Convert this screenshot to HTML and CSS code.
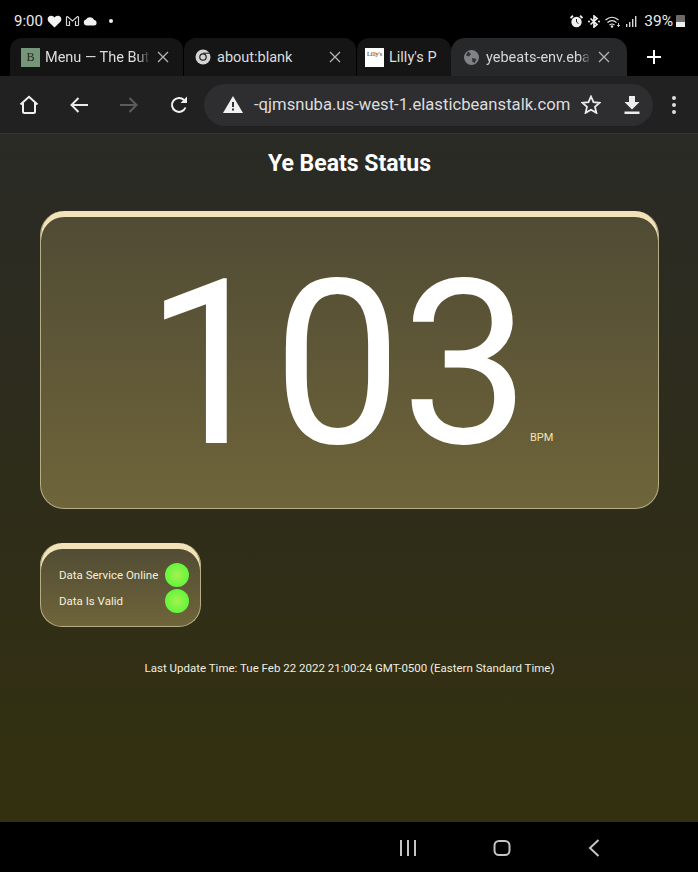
FILE: index.html
```html
<!DOCTYPE html>
<html lang="en">
<head>
    <meta charset="UTF-8">
    <meta name="viewport" content="width=device-width, initial-scale=1.0">
    <title>Ye Beats Status</title>
    <link rel="stylesheet" href="styles.css">
</head>
<body>
<div class="status-bar">
    <div class="status-left">
        <span class="clock">9:00</span>
        <svg class="st-icon" width="15" height="13" viewBox="0 0 15 13"><path d="M7.500 12.500 1.600 6.800C-.2 4.900.6 1.200 3.600.8c1.700-.2 3 .6 3.900 1.800C8.400 1.400 9.700.6 11.400.8c3 .4 3.800 4.100 2 6z" fill="#f2f2f2"/></svg>
        <svg class="st-icon" width="15" height="12" viewBox="0 0 15 12"><path d="M1.500 10.500V2.500q0-1.200 1.200-.7L7.500 6l4.800-4.200q1.200-.5 1.200.7v8M1.500 10.500h3V6M13.500 10.500h-3V6" fill="none" stroke="#d8d8d8" stroke-width="1.200"/></svg>
        <svg class="st-icon" width="15" height="9" viewBox="0 0 15 9"><path d="M3.500 8.500a3 3 0 0 1-.5-5.900A4.500 4.500 0 0 1 11.200 3a2.800 2.800 0 0 1 .3 5.500z" fill="#f0f0f0"/></svg>
        <span class="dot"></span>
    </div>
    <div class="status-right">
        <svg width="13" height="13" viewBox="0 0 13 13"><circle cx="6.500" cy="7" r="5.200" fill="#f0f0f0"/><path d="M.5 3 3 .8M12.500 3 10 .8" stroke="#f0f0f0" stroke-width="1.800"/><path d="M6.500 4v3l2 1.500" stroke="#222" fill="none"/></svg>
        <svg class="st-bt" width="12" height="13" viewBox="0 0 12 13"><path d="M2.500 3.500 9 9.500 6 12V1l3 2.500-6.500 6" fill="none" stroke="#f0f0f0" stroke-width="1.700"/><circle cx="1" cy="6.500" r="1" fill="#f0f0f0"/><circle cx="11" cy="6.500" r="1" fill="#f0f0f0"/></svg>
        <svg class="st-wifi" width="16" height="13" viewBox="0 0 16 13"><path d="M.5 5q6.500-5.500 13 0M2.500 7.500q4.500-3.800 9 0M4.500 10q2.500-2 5 0" fill="none" stroke="#e8e8e8" stroke-width="1.200"/><circle cx="7" cy="11.500" r="1.200" fill="#e8e8e8"/><path d="M13.500 8v4M12 10.500h3" stroke="#ccc"/></svg>
        <svg width="11" height="12" viewBox="0 0 11 12"><path d="M0 9h1.400v3H0zM3 7h1.400v5H3zM6 4h1.400v8H6zM9 1h1.400v11H9z" fill="#d8d8d8"/></svg>
        <span class="battery-text">39%</span>
        <span class="battery"><span class="battery-fill"></span></span>
    </div>
</div>

<div class="tab-strip">
    <div class="tab tab-1">
        <span class="fav fav-b">B</span>
        <span class="tab-title">Menu — The But</span>
        <svg class="tab-x" width="12" height="12" viewBox="0 0 12 12"><path d="M1 1l10 10M11 1 1 11" stroke="#b4b4b4" stroke-width="1.300"/></svg>
    </div>
    <div class="tab tab-2">
        <svg class="fav-svg" width="16" height="16" viewBox="0 0 16 16"><circle cx="8" cy="8" r="7.500" fill="#d4d4d4"/><circle cx="8" cy="8" r="3.800" fill="#1c1c1c"/><circle cx="8" cy="8" r="2.600" fill="#d4d4d4"/><path d="M8 4.200h6.600" stroke="#1c1c1c" stroke-width="1"/></svg>
        <span class="tab-title">about:blank</span>
        <svg class="tab-x" width="12" height="12" viewBox="0 0 12 12"><path d="M1 1l10 10M11 1 1 11" stroke="#b4b4b4" stroke-width="1.300"/></svg>
    </div>
    <div class="tab tab-3">
        <span class="fav fav-l">Lilly's</span>
        <span class="tab-title">Lilly's P</span>
    </div>
    <div class="tab tab-active">
        <svg class="fav-svg" width="15" height="15" viewBox="0 0 15 15"><circle cx="7.500" cy="7.500" r="7.500" fill="#808285"/><path d="M4 1.500 7 4 5 6.500 2 5.500zM8 8l4.500 1-2 4-2-1z" fill="#303134"/></svg>
        <span class="tab-title">yebeats-env.eba</span>
        <svg class="tab-x" width="12" height="12" viewBox="0 0 12 12"><path d="M1 1l10 10M11 1 1 11" stroke="#b4b4b4" stroke-width="1.300"/></svg>
    </div>
    <span class="new-tab">
        <svg width="16" height="16" viewBox="0 0 16 16"><path d="M8 1v14M1 8h14" stroke="#fff" stroke-width="2"/></svg>
    </span>
</div>

<div class="toolbar">
    <svg class="tool" width="20" height="20" viewBox="0 0 20 20"><path d="M1.500 9.500 10 1.800l8.500 7.700M4 8v8.500q0 1.500 1.500 1.500h9q1.500 0 1.500-1.500V8" fill="none" stroke="#f0f0f0" stroke-width="2"/></svg>
    <svg class="tool tool-back" width="18" height="16" viewBox="0 0 18 16"><path d="M8.500 1 1.500 8l7 7M2 8h16" fill="none" stroke="#eaeaea" stroke-width="2"/></svg>
    <svg class="tool tool-fwd" width="18" height="16" viewBox="0 0 18 16"><path d="M9.500 1l7 7-7 7M16 8H0" fill="none" stroke="#5c5c5c" stroke-width="2"/></svg>
    <svg class="tool tool-reload" width="18" height="18" viewBox="0 0 18 18"><path d="M15.500 11.500A7 7 0 1 1 14 4" fill="none" stroke="#f0f0f0" stroke-width="2"/><path d="M10.500 7H17V.5z" fill="#f0f0f0"/></svg>
    <div class="omnibox">
        <svg class="warn" width="20" height="17" viewBox="0 0 20 17"><path d="M10 0 20 17H0z" fill="#f0f0f0"/><path d="M9 6h2v5H9zM9 12.500h2v2H9z" fill="#333"/></svg>
        <span class="url">-qjmsnuba.us-west-1.elasticbeanstalk.com</span>
        <svg class="star" width="20" height="19" viewBox="0 0 20 19"><path d="M10 1.500l2.500 5.700 6.200.6-4.700 4.100 1.400 6L10 14.800l-5.400 3.100 1.400-6-4.700-4.100 6.200-.6z" fill="none" stroke="#ececec" stroke-width="1.800"/></svg>
        <svg class="dl" width="16" height="18" viewBox="0 0 16 18"><path d="M5 0h6v6h4.500L8 13.500.5 6H5zM.5 15.500h15V18H.5z" fill="#ececec"/></svg>
    </div>
    <span class="menu-dots"><i></i><i></i><i></i></span>
</div>

<main class="page">
    <h1>Ye Beats Status</h1>
    <section class="card bpm-card">
        <span class="bpm-value">103</span>
        <span class="bpm-unit">BPM</span>
    </section>
    <section class="card health-card">
        <div class="health-row">
            <span>Data Service Online</span>
            <span class="led"></span>
        </div>
        <div class="health-row">
            <span>Data Is Valid</span>
            <span class="led"></span>
        </div>
    </section>
    <p class="update-time">Last Update Time: Tue Feb 22 2022 21:00:24 GMT-0500 (Eastern Standard Time)</p>
</main>

<div class="nav-bar">
    <svg width="18" height="18" viewBox="0 0 18 18"><path d="M3 1v16M10 1v16M17 1v16" stroke="#c4c4c4" stroke-width="2"/></svg>
    <svg width="18" height="18" viewBox="0 0 18 18"><rect x="1.500" y="2" width="15" height="14" rx="4.500" fill="none" stroke="#c4c4c4" stroke-width="2"/></svg>
    <svg width="12" height="18" viewBox="0 0 12 18"><path d="M10.500 1 2 9l8.500 8" fill="none" stroke="#c4c4c4" stroke-width="2"/></svg>
</div>
</body>
</html>
```

FILE: styles.css
```css
* {
    box-sizing: border-box;
}

body {
    background-color: #000000;
    color: #FFFFFF;
    font-family: Roboto, Arial, sans-serif;
    margin: 0;
    padding: 0;
    display: flex;
    flex-direction: column;
    height: 872px;
    overflow: hidden;
}

/* phone status bar */
.status-bar {
    height: 38px;
    flex: none;
    display: flex;
    justify-content: space-between;
    align-items: center;
    padding: 4px 13px 0 14px;
    background-color: #000000;
}

.status-left, .status-right {
    display: flex;
    align-items: center;
}

.clock {
    font-size: 15px;
    color: #ececec;
    margin-right: 4px;
}

.st-icon {
    margin-right: 3px;
}

.dot {
    width: 4px;
    height: 4px;
    border-radius: 50%;
    background-color: #eeeeee;
    margin-left: 8px;
}

.status-right {
    gap: 5px;
}

.battery-text {
    font-size: 15.500px;
    color: #ececec;
    margin-left: 2px;
}

.battery {
    width: 9px;
    height: 12px;
    background-color: #6a6a6a;
    border-radius: 1px;
    display: flex;
    align-items: flex-end;
    margin-left: -2px;
}

.battery-fill {
    width: 100%;
    height: 5px;
    background-color: #eeeeee;
}

/* chrome tabs */
.tab-strip {
    height: 38px;
    flex: none;
    display: flex;
    padding-left: 10px;
    background-color: #000000;
}

.tab {
    height: 38px;
    display: flex;
    align-items: center;
    background-color: #151515;
    border-radius: 12px 12px 0 0;
    overflow: hidden;
    font-size: 14.500px;
    color: #dddddd;
    margin-right: 1px;
}

.tab-1 {
    width: 173px;
    padding-left: 11px;
}

.tab-2 {
    width: 172px;
    padding-left: 11px;
}

.tab-3 {
    width: 94px;
    padding-left: 8px;
    margin-right: 0;
}

.tab-active {
    width: 176px;
    padding-left: 13px;
    background-color: #27282a;
    border-radius: 14px 14px 0 0;
}

.tab-title {
    flex: 1;
    min-width: 0;
    white-space: nowrap;
    overflow: hidden;
    margin-left: 5px;
    -webkit-mask-image: linear-gradient(to left, transparent 0, #000 12px);
    mask-image: linear-gradient(to left, transparent 0, #000 12px);
}

.tab-2 .tab-title {
    margin-left: 6px;
    -webkit-mask-image: none;
    mask-image: none;
}

.tab-3 .tab-title {
    margin-left: 5px;
    -webkit-mask-image: none;
    mask-image: none;
}

.tab-active .tab-title {
    margin-left: 7px;
    color: #d6d6d6;
}

.tab-x {
    flex: none;
    margin: 0 14px 0 7px;
}

.tab-2 .tab-x {
    margin-right: 15px;
}

.tab-active .tab-x {
    margin-right: 17px;
}

.fav {
    flex: none;
    width: 19px;
    height: 19px;
    display: block;
}

.fav-b {
    background-color: #76967a;
    color: #1e2a20;
    font-family: "Liberation Serif", serif;
    font-size: 12px;
    line-height: 19px;
    text-align: center;
}

.fav-l {
    background-color: #ffffff;
    color: #222222;
    font-family: "Liberation Serif", serif;
    font-size: 6px;
    line-height: 13px;
    text-align: center;
    overflow: hidden;
}

.new-tab {
    margin-left: 18px;
    display: flex;
    align-items: center;
}

/* chrome toolbar */
.toolbar {
    height: 58px;
    flex: none;
    display: flex;
    align-items: center;
    padding: 0 0 0 19px;
    border-bottom: 1px solid #353535;
    background-color: #212121;
}

.tool-back {
    margin-left: 31px;
}

.tool-fwd {
    margin-left: 32px;
}

.tool-reload {
    margin-left: 32px;
}

.omnibox {
    width: 449px;
    height: 42px;
    margin-left: 16px;
    background-color: #2e2e31;
    border-radius: 21px;
    display: flex;
    align-items: center;
    padding-left: 19px;
}

.url {
    font-size: 16.650px;
    color: #dcdcdc;
    margin-left: 11px;
    white-space: nowrap;
}

.star {
    margin-left: 11px;
    flex: none;
}

.dl {
    margin-left: 23px;
    flex: none;
}

.menu-dots {
    display: flex;
    flex-direction: column;
    gap: 3px;
    margin-left: 19px;
}

.menu-dots i {
    width: 4px;
    height: 4px;
    border-radius: 50%;
    background-color: #dddddd;
}

/* page content */
.page {
    height: 688px;
    flex: none;
    padding: 0 39px 0 40px;
    background: linear-gradient(to bottom, #2a2a26 0%, #33300f 100%);
}

h1 {
    text-align: center;
    font-size: 23px;
    font-weight: 700;
    line-height: 26px;
    margin: 17px 0 34px;
    color: #FFFFFF;
}

.card {
    background: linear-gradient(to bottom, #4f4a34 0%, #6f653a 100%);
    border: 1px solid #b5ad85;
    border-top: none;
    box-shadow: inset 0 6px 0 #f2e2b8;
}

.bpm-card {
    height: 298px;
    border-radius: 24px;
    display: flex;
    align-items: flex-end;
    padding: 0 0 57px 104px;
}

.bpm-value {
    font-size: 229.500px;
    line-height: 172px;
    color: #FFFFFF;
    letter-spacing: -1px;
}

.bpm-unit {
    font-size: 11px;
    color: #f2e2b8;
    margin: 0 0 7px 1px;
}

.health-card {
    width: 161px;
    height: 84px;
    margin-top: 34px;
    border-radius: 22px;
    padding: 19px 11px 0 18px;
    font-size: 11.500px;
    color: #f5f0dc;
}

.health-row {
    height: 26px;
    display: flex;
    align-items: center;
    justify-content: space-between;
    white-space: nowrap;
}

.led {
    width: 24px;
    height: 24px;
    flex: none;
    border-radius: 50%;
    background: radial-gradient(circle, #a8f050 0%, #6cf53f 60%, #50ee3a 100%);
}

.update-time {
    margin: 34px 0 0;
    text-align: center;
    font-size: 11.500px;
    color: #f0eee0;
}

/* phone nav bar */
.nav-bar {
    height: 50px;
    flex: none;
    display: flex;
    align-items: center;
    justify-content: flex-end;
    gap: 77px;
    padding: 2px 98px 0 0;
    background-color: #000000;
}
```
